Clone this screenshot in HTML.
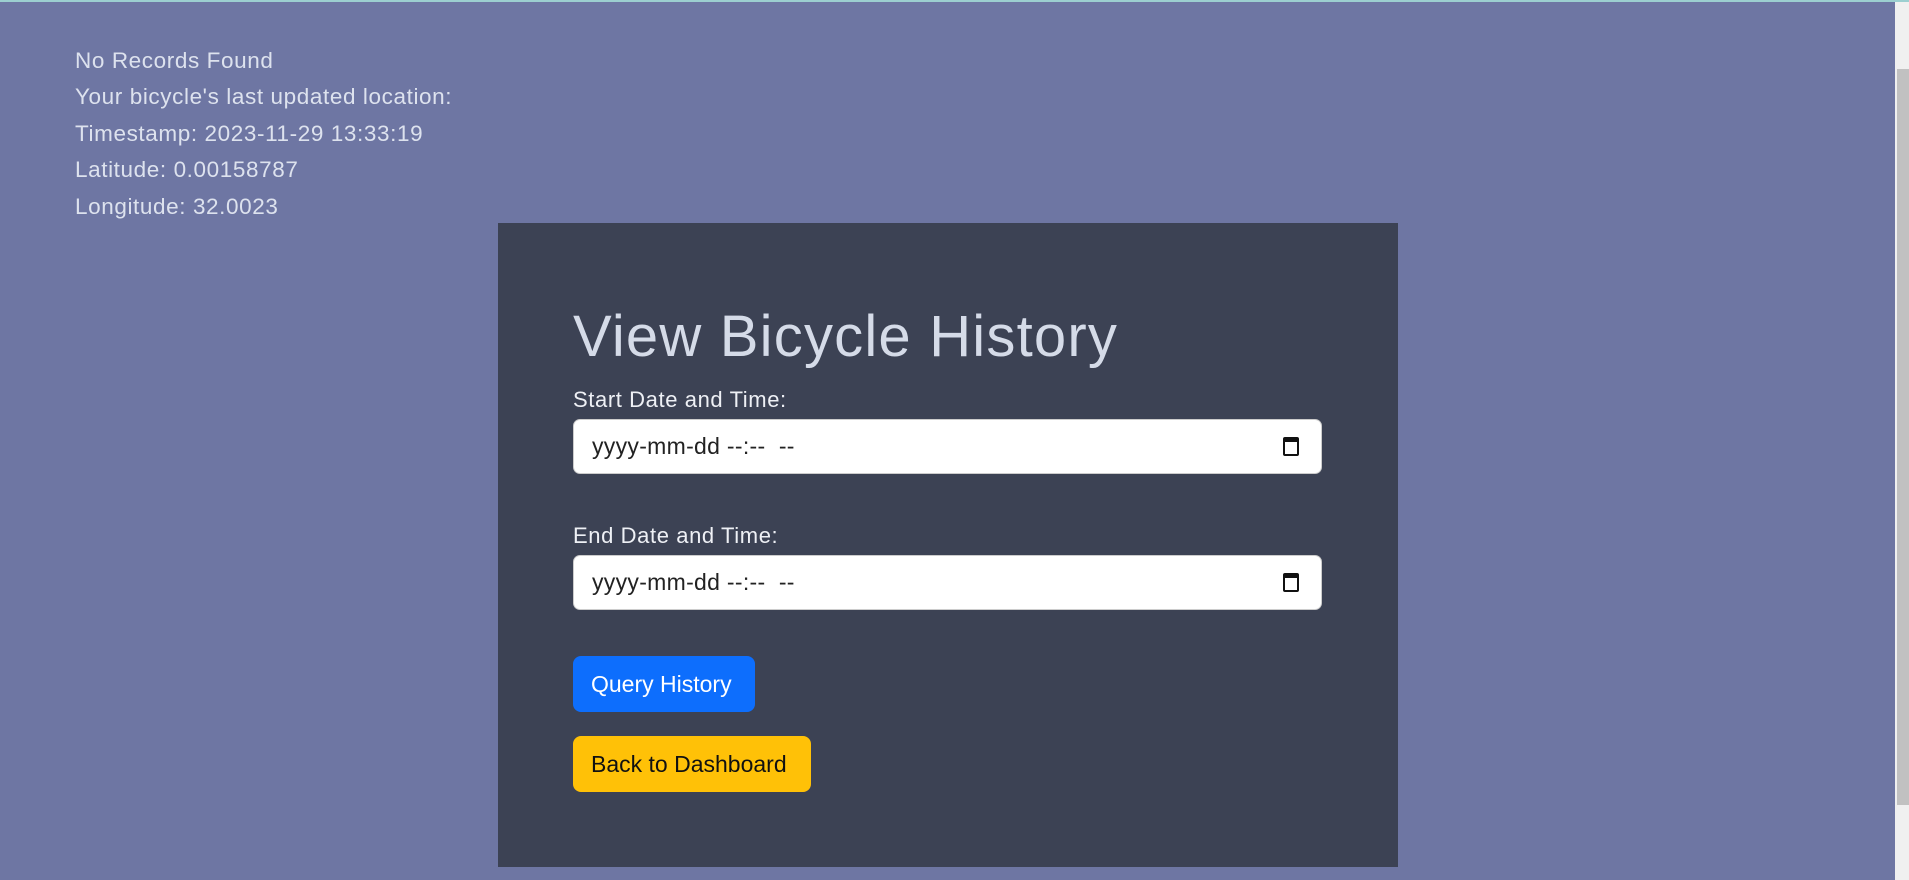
<!DOCTYPE html>
<html><head><style>
html,body{margin:0;padding:0}
body{width:1909px;height:880px;background:#6e76a3;position:relative;overflow:hidden;font-family:"Liberation Sans",sans-serif;color:#dde2ee}
.top{position:absolute;left:0;top:0;width:1909px;height:2px;background:#9ccfd0}
.info{position:absolute;left:75px;top:43px;font-size:22.5px;line-height:36.4px;letter-spacing:0.6px}
.card{position:absolute;left:498px;top:223px;width:900px;height:644px;background:#3c4254}
h1{position:absolute;left:75px;top:80px;margin:0;font-size:58px;font-weight:normal;color:#d5dbe8;letter-spacing:1.2px}
.lbl{position:absolute;left:75px;font-size:22px;color:#eef0f5;letter-spacing:0.6px}
.inp{position:absolute;left:75px;width:749px;height:55px;background:#fff;border-radius:7px;border:1px solid #ccc;box-sizing:border-box;color:#222;font-size:23px;line-height:53px;padding-left:18px;letter-spacing:0.3px}
.cal{position:absolute;right:22px;top:17px;width:16px;height:19px;border:2px solid #111;border-top-width:5px;box-sizing:border-box;border-radius:2px}
.btn{position:absolute;left:75px;height:56px;border-radius:8px;font-size:23px;line-height:56px;padding:0 18px;box-sizing:border-box;white-space:nowrap}
.sb{position:absolute;left:1895px;top:2px;width:14px;height:878px;background:#f0f0f0}
.th{position:absolute;left:2px;top:67px;width:12px;height:736px;background:#c1c1c1}
</style></head><body>
<div class="top"></div>
<div class="info">No Records Found<br>Your bicycle's last updated location:<br>Timestamp: 2023-11-29 13:33:19<br>Latitude: 0.00158787<br>Longitude: 32.0023</div>
<div class="card">
<h1>View Bicycle History</h1>
<div class="lbl" style="top:164px">Start Date and Time:</div>
<div class="inp" style="top:196px">yyyy-mm-dd --:-- &nbsp;--<div class="cal"></div></div>
<div class="lbl" style="top:300px">End Date and Time:</div>
<div class="inp" style="top:332px">yyyy-mm-dd --:-- &nbsp;--<div class="cal"></div></div>
<div class="btn" style="top:433px;width:182px;background:#0d6efd;color:#fff">Query History</div>
<div class="btn" style="top:513px;width:238px;background:#ffc107;color:#111">Back to Dashboard</div>
</div>
<div class="sb"><div class="th"></div></div>
</body></html>
